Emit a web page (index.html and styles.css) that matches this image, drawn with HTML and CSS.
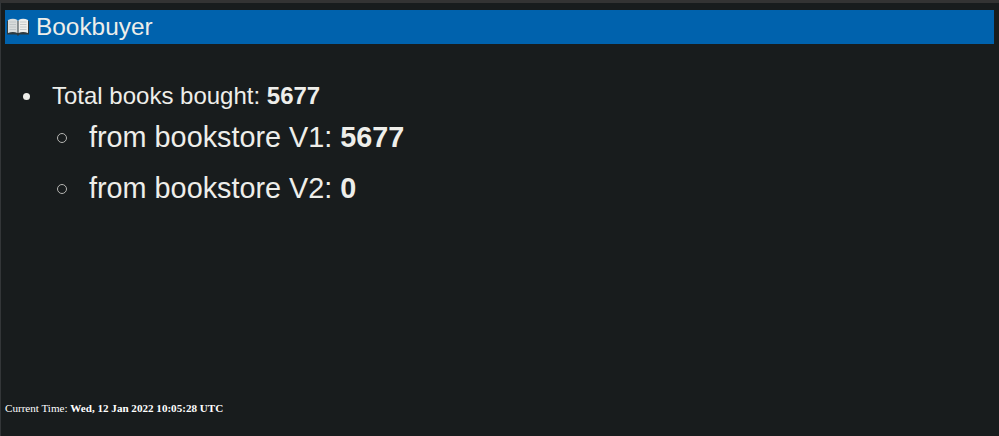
FILE: index.html
```html
<!DOCTYPE html>
<html lang="en">
<head>
    <meta charset="UTF-8">
    <title>Bookbuyer</title>
    <link rel="stylesheet" href="styles.css">
</head>
<body>
    <h1 class="banner">
        <svg class="bookIcon" width="22" height="19" viewBox="0 0 22 19">
            <path d="M0 3 L0 16.5 L9.5 16.5 L11 18 L12.5 16.5 L22 16.5 L22 3 Z" fill="#2f3b40"/>
            <path d="M1 2 Q6 -0.5 10.5 2 L10.5 15 Q6 13 1 15 Z" fill="#d9dcdc"/>
            <path d="M11.5 2 Q16 -0.5 21 2 L21 15 Q16 13 11.5 15 Z" fill="#eeeeec"/>
            <path d="M2.5 4 H9 M2.5 6.5 H9 M2.5 9 H9 M2.5 11.5 H9 M13 4 H19.5 M13 6.5 H19.5 M13 9 H19.5 M13 11.5 H19.5" stroke="#b9bfc2" stroke-width="0.8"/>
        </svg>
        <span>Bookbuyer</span>
    </h1>

    <ul class="totals">
        <li>Total books bought: <b>5677</b>
            <ul class="sources">
                <li>from bookstore V1: <b>5677</b></li>
                <li>from bookstore V2: <b>0</b></li>
            </ul>
        </li>
    </ul>

    <p class="currentTime">Current Time: <b>Wed, 12 Jan 2022 10:05:28 UTC</b></p>
</body>
</html>
```

FILE: styles.css
```css
html, body {
    height: 100%;
}

body {
    margin: 0;
    box-sizing: border-box;
    display: flex;
    flex-direction: column;
    overflow: hidden;
    padding: 7px 5px 0 4px;
    background-color: #181c1d;
    border-top: 3px solid #333333;
    border-left: 1px solid #333638;
    color: #eeeeea;
    font-family: "Liberation Sans", Arial, sans-serif;
}

.banner {
    display: flex;
    align-items: center;
    gap: 7px;
    height: 34px;
    margin: 0;
    padding-left: 2px;
    background-color: #0062ad;
    font-size: 24.4px;
    font-weight: normal;
}

.totals {
    margin: 37px 0 0 0;
    padding-left: 47px;
    list-style: none;
    font-size: 24px;
    line-height: 30px;
}

.totals > li::before {
    content: "";
    display: inline-block;
    width: 7px;
    height: 7px;
    margin-left: -29px;
    margin-right: 22px;
    border-radius: 50%;
    background-color: #eeeeea;
    vertical-align: 4px;
}

.sources {
    margin: 9px 0 0 0;
    padding-left: 37px;
    list-style: none;
    font-size: 28.8px;
}

.sources li {
    line-height: 34px;
    margin-bottom: 17px;
}

.sources li::before {
    content: "";
    display: inline-block;
    box-sizing: border-box;
    width: 10px;
    height: 10px;
    margin-left: -32px;
    margin-right: 22px;
    border: 1px solid #b5b5b2;
    border-radius: 50%;
    vertical-align: 4px;
}

.currentTime {
    margin: auto 0 21px 0;
    font-family: "Liberation Serif", "Times New Roman", serif;
    font-size: 11.1px;
    line-height: 14px;
    color: #ffffff;
}
```
